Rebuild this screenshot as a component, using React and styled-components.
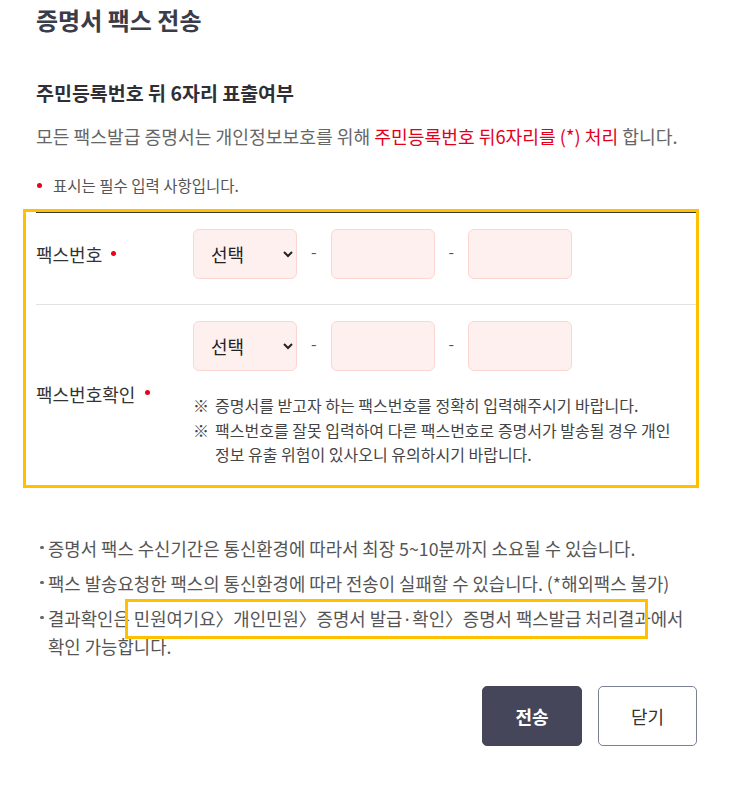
import React from "react";
import styled, { createGlobalStyle } from "styled-components";

const Global = createGlobalStyle`
  html, body { margin: 0; padding: 0; background: #fff; }
  body {
    font-family: "Noto Sans CJK KR", "Noto Sans", sans-serif;
    color: #333;
    -webkit-font-smoothing: antialiased;
  }
  * { box-sizing: border-box; }
`;

const Page = styled.div`
  width: 743px;
  padding: 4px 46px 40px 36px;
`;

const Title = styled.h1`
  margin: 0;
  font-size: 24px;
  line-height: 32px;
  font-weight: 700;
  color: #3b3c4a;
`;

const Heading = styled.h2`
  margin: 44px 0 0;
  font-size: 19.5px;
  line-height: 26px;
  font-weight: 700;
  color: #2f2f35;
`;

const Desc = styled.p`
  margin: 17px 0 0;
  font-size: 18.2px;
  line-height: 26px;
  color: #666;
  white-space: nowrap;
`;

const Red = styled.span`
  color: #e4001b;
`;

const RequiredNote = styled.p`
  margin: 26px 0 0;
  font-size: 15.5px;
  line-height: 20px;
  color: #555;
  display: flex;
  align-items: center;
`;

const Dot = styled.span`
  display: inline-block;
  flex: none;
  width: 5px;
  height: 5px;
  border-radius: 50%;
  background: #e8001c;
  margin: ${(p) => p.$margin || "0"};
  vertical-align: middle;
`;

const Table = styled.div`
  position: relative;
  margin-top: 17px;
  border-top: 1px solid #3a3a3a;
  &::after {
    content: "";
    position: absolute;
    top: -4px;
    left: -13px;
    right: -2px;
    bottom: -2px;
    border: 3px solid #ffc000;
    pointer-events: none;
  }
`;

const Row = styled.div`
  display: grid;
  grid-template-columns: 157px 1fr;
  border-bottom: 1px solid #e2e2e2;
  padding: 16px 0 ${(p) => p.$pb || "25px"};
`;

const Label = styled.div`
  display: flex;
  align-items: center;
  font-size: 18px;
  color: #333;
`;

const Fields = styled.div`
  display: flex;
  flex-direction: column;
`;

const FieldRow = styled.div`
  display: flex;
  align-items: center;
  gap: 14px;
`;

const boxStyle = `
  width: 104px;
  height: 50px;
  background-color: #fff0f0;
  border: 1px solid #fbd6d1;
  border-radius: 6px;
  font-family: "Noto Sans CJK KR", "Noto Sans", sans-serif;
  font-size: 18px;
  color: #222;
  outline: none;
`;

const Select = styled.select`
  ${boxStyle}
  padding: 0 8px 0 13px;
`;

const Input = styled.input`
  ${boxStyle}
  padding: 0 12px;
`;

const Dash = styled.span`
  font-size: 16px;
  line-height: 1;
  color: #555;
  padding-bottom: 7px;
`;

const Notes = styled.ul`
  list-style: none;
  margin: 22px 0 0;
  padding: 0;
  font-size: 16px;
  line-height: 24.5px;
  color: #444;
`;

const NoteItem = styled.li`
  display: flex;
`;

const Mark = styled.span`
  flex: none;
  width: 22px;
`;

const InfoList = styled.ul`
  list-style: none;
  margin: 48px 0 0;
  padding: 0;
  font-size: 17.8px;
  line-height: 28px;
  color: #555;
`;

const InfoItem = styled.li`
  display: flex;
  & + & { margin-top: 7px; }
`;

const Bullet = styled.span`
  flex: none;
  width: 12px;
  height: 28px;
  display: flex;
  align-items: center;
  &::before {
    content: "";
    width: 3.5px;
    height: 3.5px;
    border-radius: 50%;
    background: #666;
    margin-left: 4px;
  }
`;

const Highlight = styled.span`
  position: relative;
  &::after {
    content: "";
    position: absolute;
    top: -6px;
    bottom: -8px;
    left: -9px;
    right: 3px;
    border: 3px solid #ffc000;
    pointer-events: none;
  }
`;

const Buttons = styled.div`
  display: flex;
  justify-content: flex-end;
  gap: 16px;
  margin-top: 26px;
`;

const Button = styled.button`
  width: ${(p) => (p.$primary ? "100px" : "99px")};
  height: 60px;
  border-radius: 5px;
  font-family: "Noto Sans CJK KR", "Noto Sans", sans-serif;
  font-size: 18px;
  font-weight: ${(p) => (p.$primary ? 700 : 400)};
  background: ${(p) => (p.$primary ? "#454659" : "#fff")};
  color: ${(p) => (p.$primary ? "#fff" : "#333")};
  border: 1px solid ${(p) => (p.$primary ? "#454659" : "#7c8191")};
  cursor: pointer;
`;

function FaxFields() {
  return (
    <FieldRow>
      <Select defaultValue="">
        <option value="">선택</option>
        <option>02</option>
        <option>031</option>
      </Select>
      <Dash>-</Dash>
      <Input type="text" />
      <Dash>-</Dash>
      <Input type="text" />
    </FieldRow>
  );
}

export default function App() {
  return (
    <>
      <Global />
      <Page>
        <Title>증명서 팩스 전송</Title>
        <Heading>주민등록번호 뒤 6자리 표출여부</Heading>
        <Desc>
          모든 팩스발급 증명서는 개인정보보호를 위해{" "}
          <Red>주민등록번호 뒤6자리를 (*) 처리</Red> 합니다.
        </Desc>
        <RequiredNote>
          <Dot $margin="0 11px 0 1px" />
          표시는 필수 입력 사항입니다.
        </RequiredNote>

        <Table>
          <Row>
            <Label>
              팩스번호
              <Dot $margin="-2px 0 0 9px" />
            </Label>
            <Fields>
              <FaxFields />
            </Fields>
          </Row>
          <Row $pb="18px">
            <Label>
              팩스번호확인
              <Dot $margin="-2px 0 0 10px" />
            </Label>
            <Fields>
              <FaxFields />
              <Notes>
                <NoteItem>
                  <Mark>※</Mark>
                  <span>증명서를 받고자 하는 팩스번호를 정확히 입력해주시기 바랍니다.</span>
                </NoteItem>
                <NoteItem>
                  <Mark>※</Mark>
                  <span>
                    팩스번호를 잘못 입력하여 다른 팩스번호로 증명서가 발송될 경우 개인
                    <br />
                    정보 유출 위험이 있사오니 유의하시기 바랍니다.
                  </span>
                </NoteItem>
              </Notes>
            </Fields>
          </Row>
        </Table>

        <InfoList>
          <InfoItem>
            <Bullet />
            <span>증명서 팩스 수신기간은 통신환경에 따라서 최장 5~10분까지 소요될 수 있습니다.</span>
          </InfoItem>
          <InfoItem>
            <Bullet />
            <span>팩스 발송요청한 팩스의 통신환경에 따라 전송이 실패할 수 있습니다. (*해외팩스 불가)</span>
          </InfoItem>
          <InfoItem>
            <Bullet />
            <span>
              결과확인은 <Highlight>민원여기요〉개인민원〉증명서 발급·확인〉증명서 팩스발급 처리결과</Highlight>에서
              <br />
              확인 가능합니다.
            </span>
          </InfoItem>
        </InfoList>

        <Buttons>
          <Button $primary>전송</Button>
          <Button>닫기</Button>
        </Buttons>
      </Page>
    </>
  );
}
